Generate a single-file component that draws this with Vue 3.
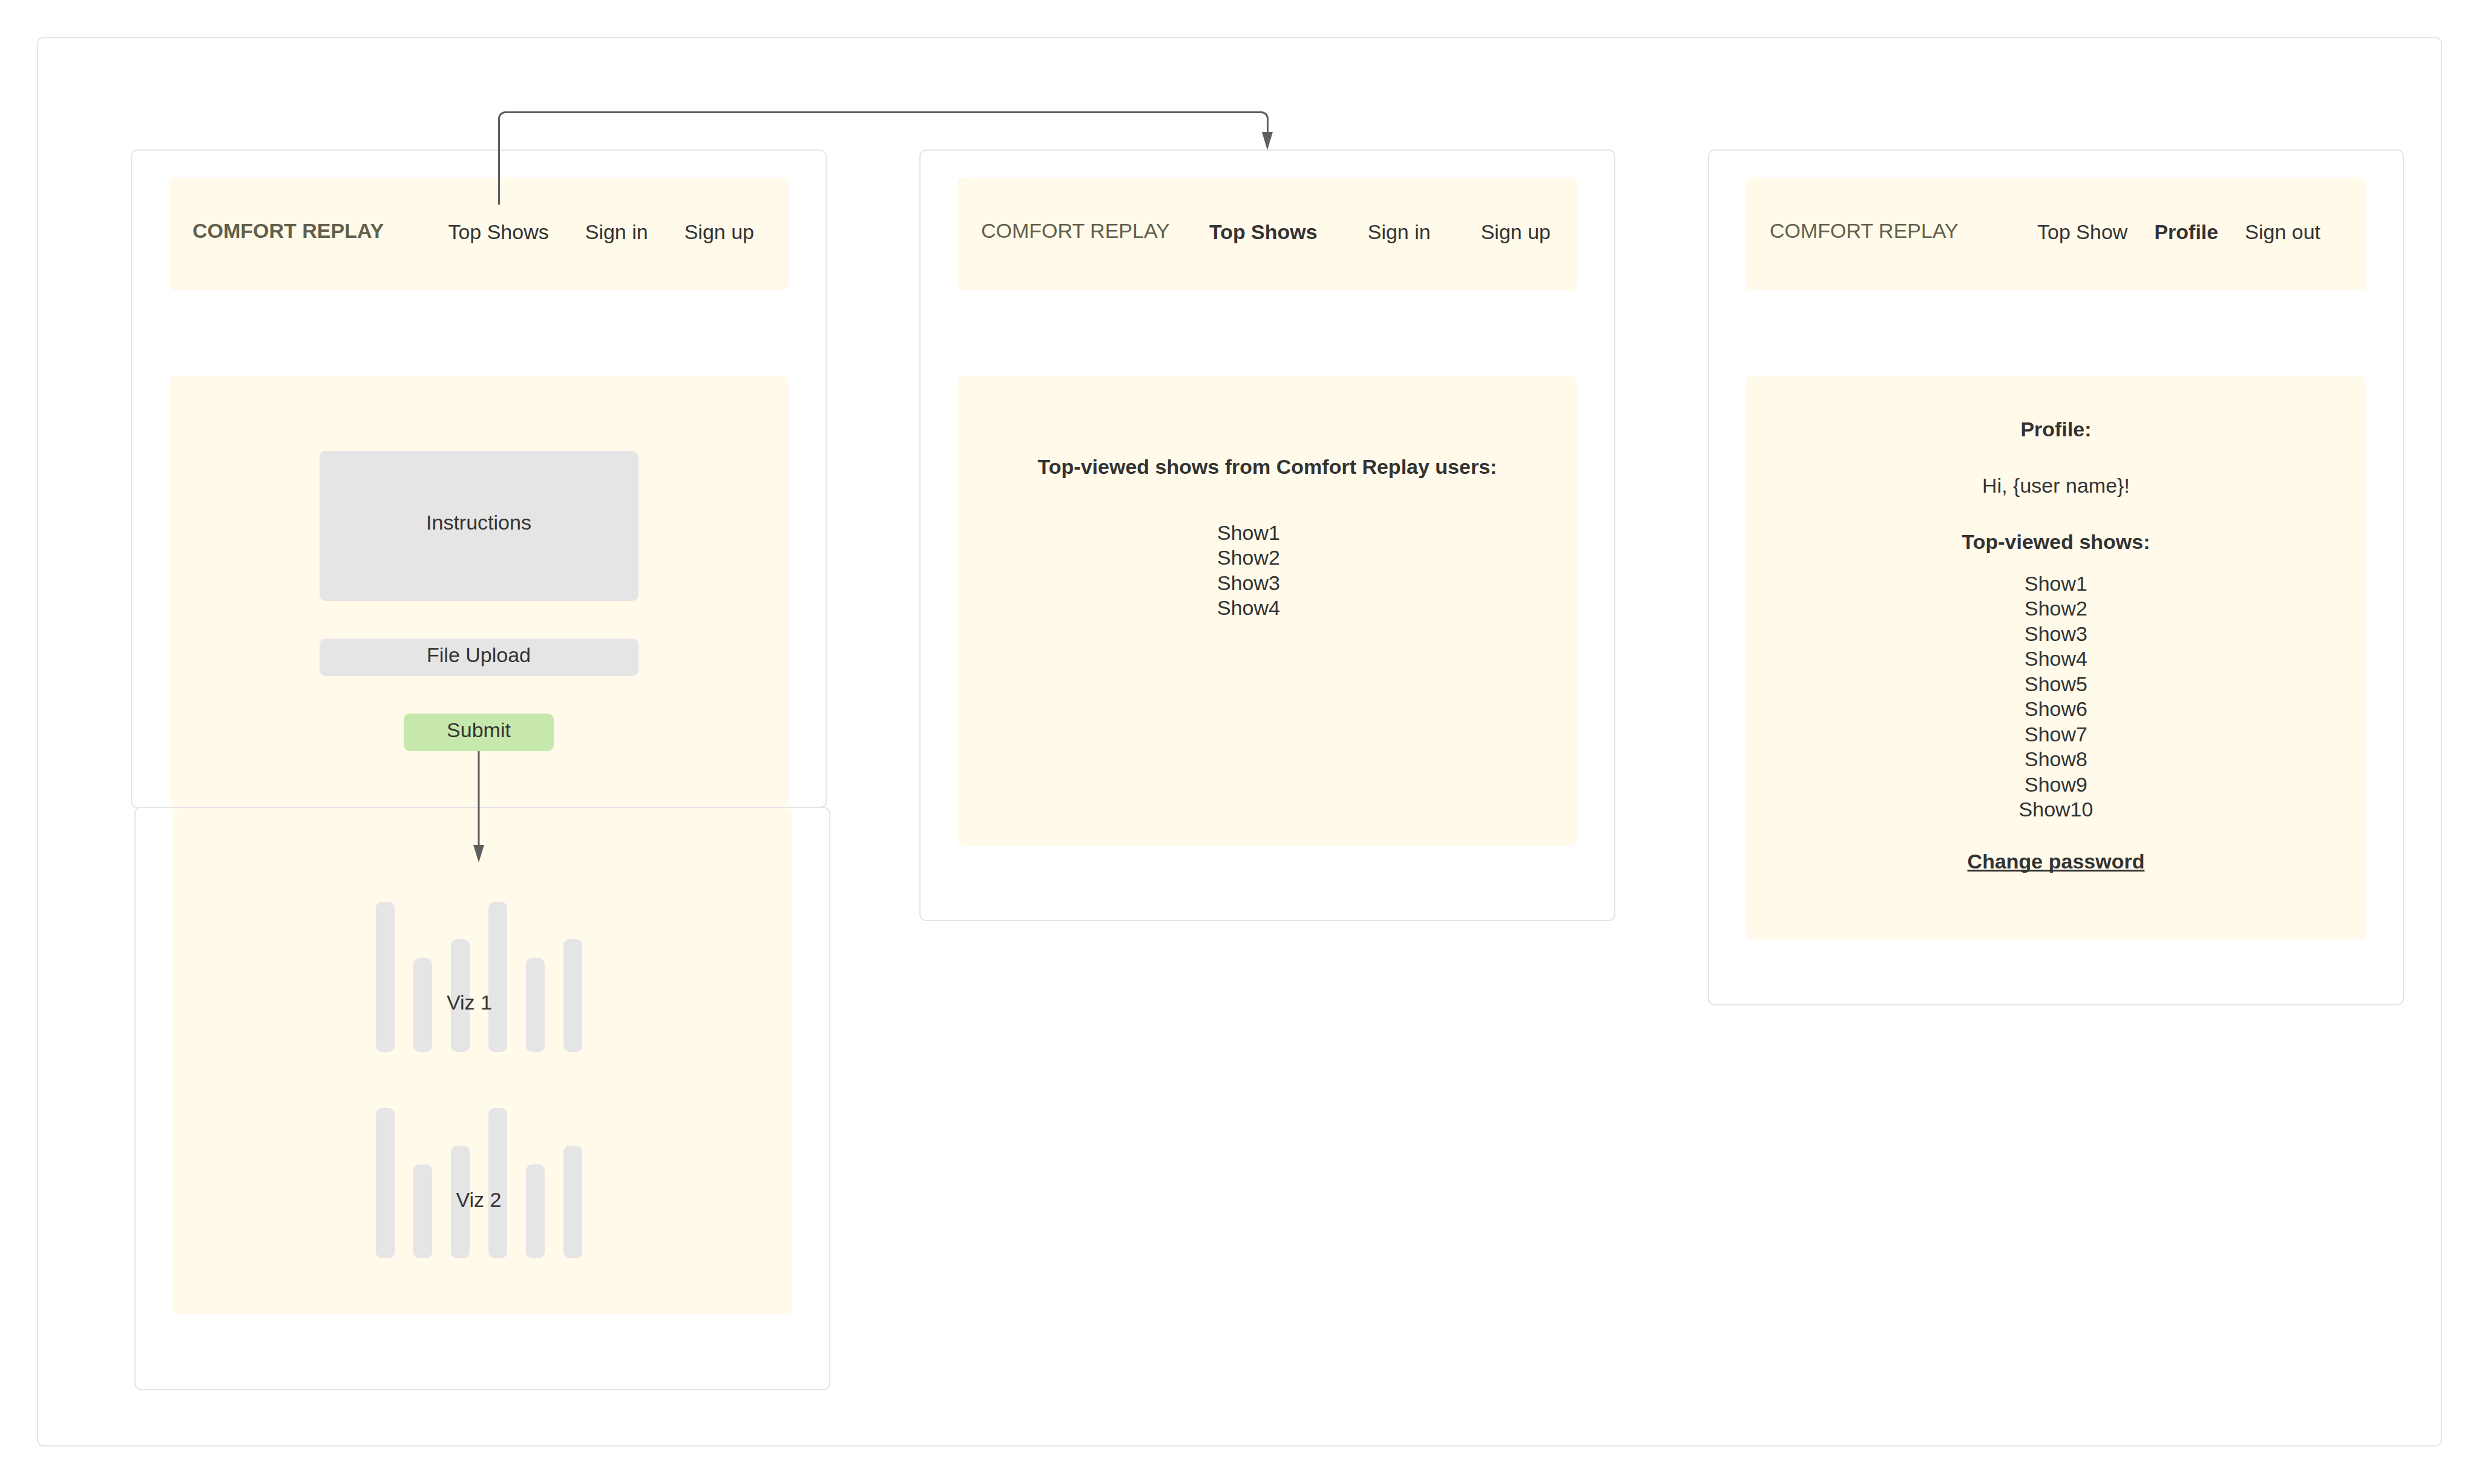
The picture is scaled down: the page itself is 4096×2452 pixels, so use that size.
<script setup>
const shows = (count) => Array.from({ length: count }, (_, i) => `Show${i + 1}`)

const topShows = shows(4)
const profileShows = shows(10)

const charts = [
  { label: 'Viz 1', side: 'left', bars: [248, 155, 186, 248, 155, 186] },
  { label: 'Viz 2', side: 'middle', bars: [248, 155, 186, 248, 155, 186] },
]
</script>

<template>
  <main class="board">
    <div class="screens">
      <div class="column">
        <section class="screen screen-home">
          <header class="bar">
            <a class="brand current" href="#">COMFORT REPLAY</a>
            <nav class="links">
              <a href="#">Top Shows</a>
              <a href="#">Sign in</a>
              <a href="#">Sign up</a>
            </nav>
          </header>
          <div class="panel panel-home">
            <p class="block instructions">Instructions</p>
            <button class="block upload" type="button">File Upload</button>
            <div class="submit-step">
              <button class="block submit" type="submit">Submit</button>
              <svg class="submit-arrow" width="18" height="184" viewBox="0 0 18 184" aria-hidden="true">
                <path d="M9 0V156" stroke="#5e5e5e" stroke-width="3" />
                <path d="M0 155H18L9 184Z" fill="#5e5e5e" />
              </svg>
            </div>
          </div>
        </section>

        <section class="screen screen-results">
          <div class="panel panel-results">
            <figure v-for="chart in charts" :key="chart.label" class="chart">
              <span
                v-for="(height, i) in chart.bars"
                :key="i"
                class="chart-bar"
                :style="{ height: height + 'px' }"
              ></span>
              <figcaption :class="['chart-label', chart.side]">{{ chart.label }}</figcaption>
            </figure>
          </div>
        </section>
      </div>

      <section class="screen screen-top">
        <header class="bar">
          <a class="brand" href="#">COMFORT REPLAY</a>
          <nav class="links links-top">
            <a class="current" href="#">Top Shows</a>
            <a href="#">Sign in</a>
            <a href="#">Sign up</a>
          </nav>
        </header>
        <div class="panel panel-top">
          <h2>Top-viewed shows from Comfort Replay users:</h2>
          <ul class="shows shows-short">
            <li v-for="show in topShows" :key="show">{{ show }}</li>
          </ul>
        </div>
      </section>

      <section class="screen screen-profile">
        <header class="bar">
          <a class="brand" href="#">COMFORT REPLAY</a>
          <nav class="links links-profile">
            <a href="#">Top Show</a>
            <a class="current" href="#">Profile</a>
            <a href="#">Sign out</a>
          </nav>
        </header>
        <div class="panel panel-profile">
          <h2>Profile:</h2>
          <p class="greeting">Hi, {user name}!</p>
          <h2>Top-viewed shows:</h2>
          <ul class="shows shows-long">
            <li v-for="show in profileShows" :key="show">{{ show }}</li>
          </ul>
          <a class="change-password" href="#">Change password</a>
        </div>
      </section>

      <div class="connector" aria-hidden="true">
        <svg class="connector-head" width="18" height="30" viewBox="0 0 18 30">
          <path d="M0 0H18L9 30Z" fill="#5e5e5e" />
        </svg>
      </div>
    </div>
  </main>
</template>

<style>
body {
  margin: 0;
  background: #fff;
}
</style>

<style scoped>
.board {
  box-sizing: border-box;
  margin: 61px;
  padding: 184px 61px 91px 153px;
  border: 2px solid #e5e5e5;
  border-radius: 11px;
  font-family: "Liberation Sans", Arial, sans-serif;
  font-size: 34px;
  line-height: 41px;
  color: #333;
}

.screens {
  position: relative;
  display: grid;
  grid-template-columns: repeat(3, minmax(0, 1fr));
  gap: 153px;
  align-items: start;
}

.screen {
  border: 2px solid #e5e5e5;
  border-radius: 11px;
  padding: 44px 61px 123px;
}

.screen-home {
  padding-bottom: 0;
}

.screen-results {
  margin: -2px -6px 0 6px;
  padding-top: 0;
}

.screen-profile {
  padding-bottom: 107px;
}

h2,
p,
ul,
figure {
  margin: 0;
  padding: 0;
  font-size: inherit;
}

a {
  color: inherit;
  text-decoration: none;
}

.current {
  font-weight: bold;
}

.bar {
  display: flex;
  justify-content: space-between;
  box-sizing: border-box;
  min-height: 187px;
  margin-bottom: 141px;
  padding: 68px 57px 68px 39px;
  border-radius: 10px;
  background: #fffaea;
  white-space: nowrap;
}

.brand {
  color: #625f4c;
}

.links {
  display: flex;
  gap: 60px;
  padding-top: 2px;
}

.links-top {
  gap: 83px;
  margin-right: -13px;
}

.links-profile {
  gap: 44px;
  margin-right: 18px;
}

.panel {
  display: flex;
  flex-direction: column;
  align-items: center;
  border-radius: 10px;
  background: #fffaea;
  text-align: center;
}

.panel-home {
  gap: 62px;
  padding: 124px 0 92px;
}

.block {
  display: flex;
  align-items: center;
  justify-content: center;
  box-sizing: border-box;
  margin: 0;
  padding: 0 0 7px;
  border: 0;
  border-radius: 10px;
  background: #e5e5e5;
  color: inherit;
  font: inherit;
}

.instructions {
  width: 527px;
  height: 248px;
  padding-bottom: 11px;
}

.upload {
  width: 527px;
  height: 62px;
}

.submit-step {
  position: relative;
}

.submit {
  width: 248px;
  height: 62px;
  background: #c7e8ac;
}

.submit-arrow {
  position: absolute;
  z-index: 1;
  top: 100%;
  left: calc(50% - 9px);
}

.panel-results {
  gap: 93px;
  padding: 155px 12px 93px 0;
}

.chart {
  position: relative;
  display: flex;
  align-items: flex-end;
  gap: 31px;
}

.chart-bar {
  width: 31px;
  border-radius: 10px;
  background: #e5e5e5;
}

.chart-label {
  position: absolute;
  left: 0;
}

.chart-label.left {
  right: 31px;
  bottom: 61px;
}

.chart-label.middle {
  right: 0;
  bottom: 76px;
}

.panel-top {
  gap: 68px;
  padding: 130px 0 372px;
}

.panel-profile {
  padding: 68px 0 108px;
}

.greeting {
  margin: 52px 0;
}

.shows {
  display: flex;
  flex-direction: column;
  justify-content: space-between;
  list-style: none;
}

.shows-short {
  min-height: 165px;
  padding-right: 62px;
}

.shows-long {
  min-height: 414px;
  margin: 28px 0 45px;
}

.change-password {
  font-weight: bold;
  text-decoration: underline;
  text-decoration-skip-ink: none;
}

.connector {
  position: absolute;
  top: -63px;
  left: calc(16% + 6px);
  right: calc(50% - 2px);
  height: 32px;
  border: 3px solid #5e5e5e;
  border-bottom: 0;
  border-radius: 12px 12px 0 0;
}

.connector::before {
  content: "";
  position: absolute;
  top: 100%;
  left: -3px;
  width: 3px;
  height: 119px;
  background: #5e5e5e;
}

.connector-head {
  position: absolute;
  right: -10px;
  bottom: -29px;
}
</style>
